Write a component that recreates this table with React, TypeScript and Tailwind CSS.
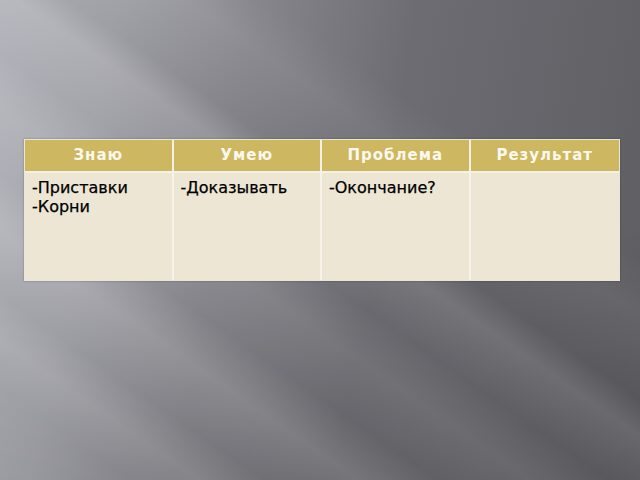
const headers = ["Знаю", "Умею", "Проблема", "Результат"];
const cells: string[][] = [["-Приставки", "-Корни"], ["-Доказывать"], ["-Окончание?"], []];

export default function App() {
  return (
    <div className="relative w-[640px] h-[480px] overflow-hidden bg-[linear-gradient(100deg,#b2b3ba_0%,#a3a3aa_16%,#85858b_36%,#6d6c72_58%,#5e5d62_100%)]">
      {/* soft diagonal light streaks */}
      <div className="absolute inset-0 bg-[linear-gradient(35deg,transparent_10%,rgba(255,255,255,0.10)_15%,transparent_20%,rgba(255,255,255,0.13)_27%,transparent_33%,rgba(255,255,255,0.08)_40%,transparent_46%,rgba(255,255,255,0.10)_53%,rgba(0,0,0,0.03)_57%,rgba(255,255,255,0.05)_66%,transparent_72%)]" />
      <div className="absolute inset-0 bg-[linear-gradient(180deg,transparent_45%,rgba(0,0,0,0.07)_100%)]" />

      <div className="relative pt-[139px] pl-[24px]">
        <div className="w-[596px] grid grid-cols-4 border border-[#e9e5da] font-['DejaVu_Sans',Verdana,sans-serif] shadow-[0_0_2px_rgba(0,0,0,0.3)]">
          {headers.map((h, i) => (
            <div
              key={h}
              className={`h-[33px] bg-[#cdb761] border-b-2 border-[#f4f0e4] pt-[4px] text-center text-[15px] font-bold tracking-[1px] text-[#fbf8ee] ${i < 3 ? "border-r-2" : ""}`}
            >
              {h}
            </div>
          ))}
          {cells.map((lines, i) => (
            <div
              key={i}
              className={`h-[107px] bg-[#ede6d4] border-[#f7f3ea] px-[7px] pt-[5px] text-[16px] leading-[19px] text-black [-webkit-text-stroke:0.25px_black] ${i < 3 ? "border-r-2" : ""}`}
            >
              {lines.map((l) => (
                <div key={l}>{l}</div>
              ))}
            </div>
          ))}
        </div>
      </div>
    </div>
  );
}
